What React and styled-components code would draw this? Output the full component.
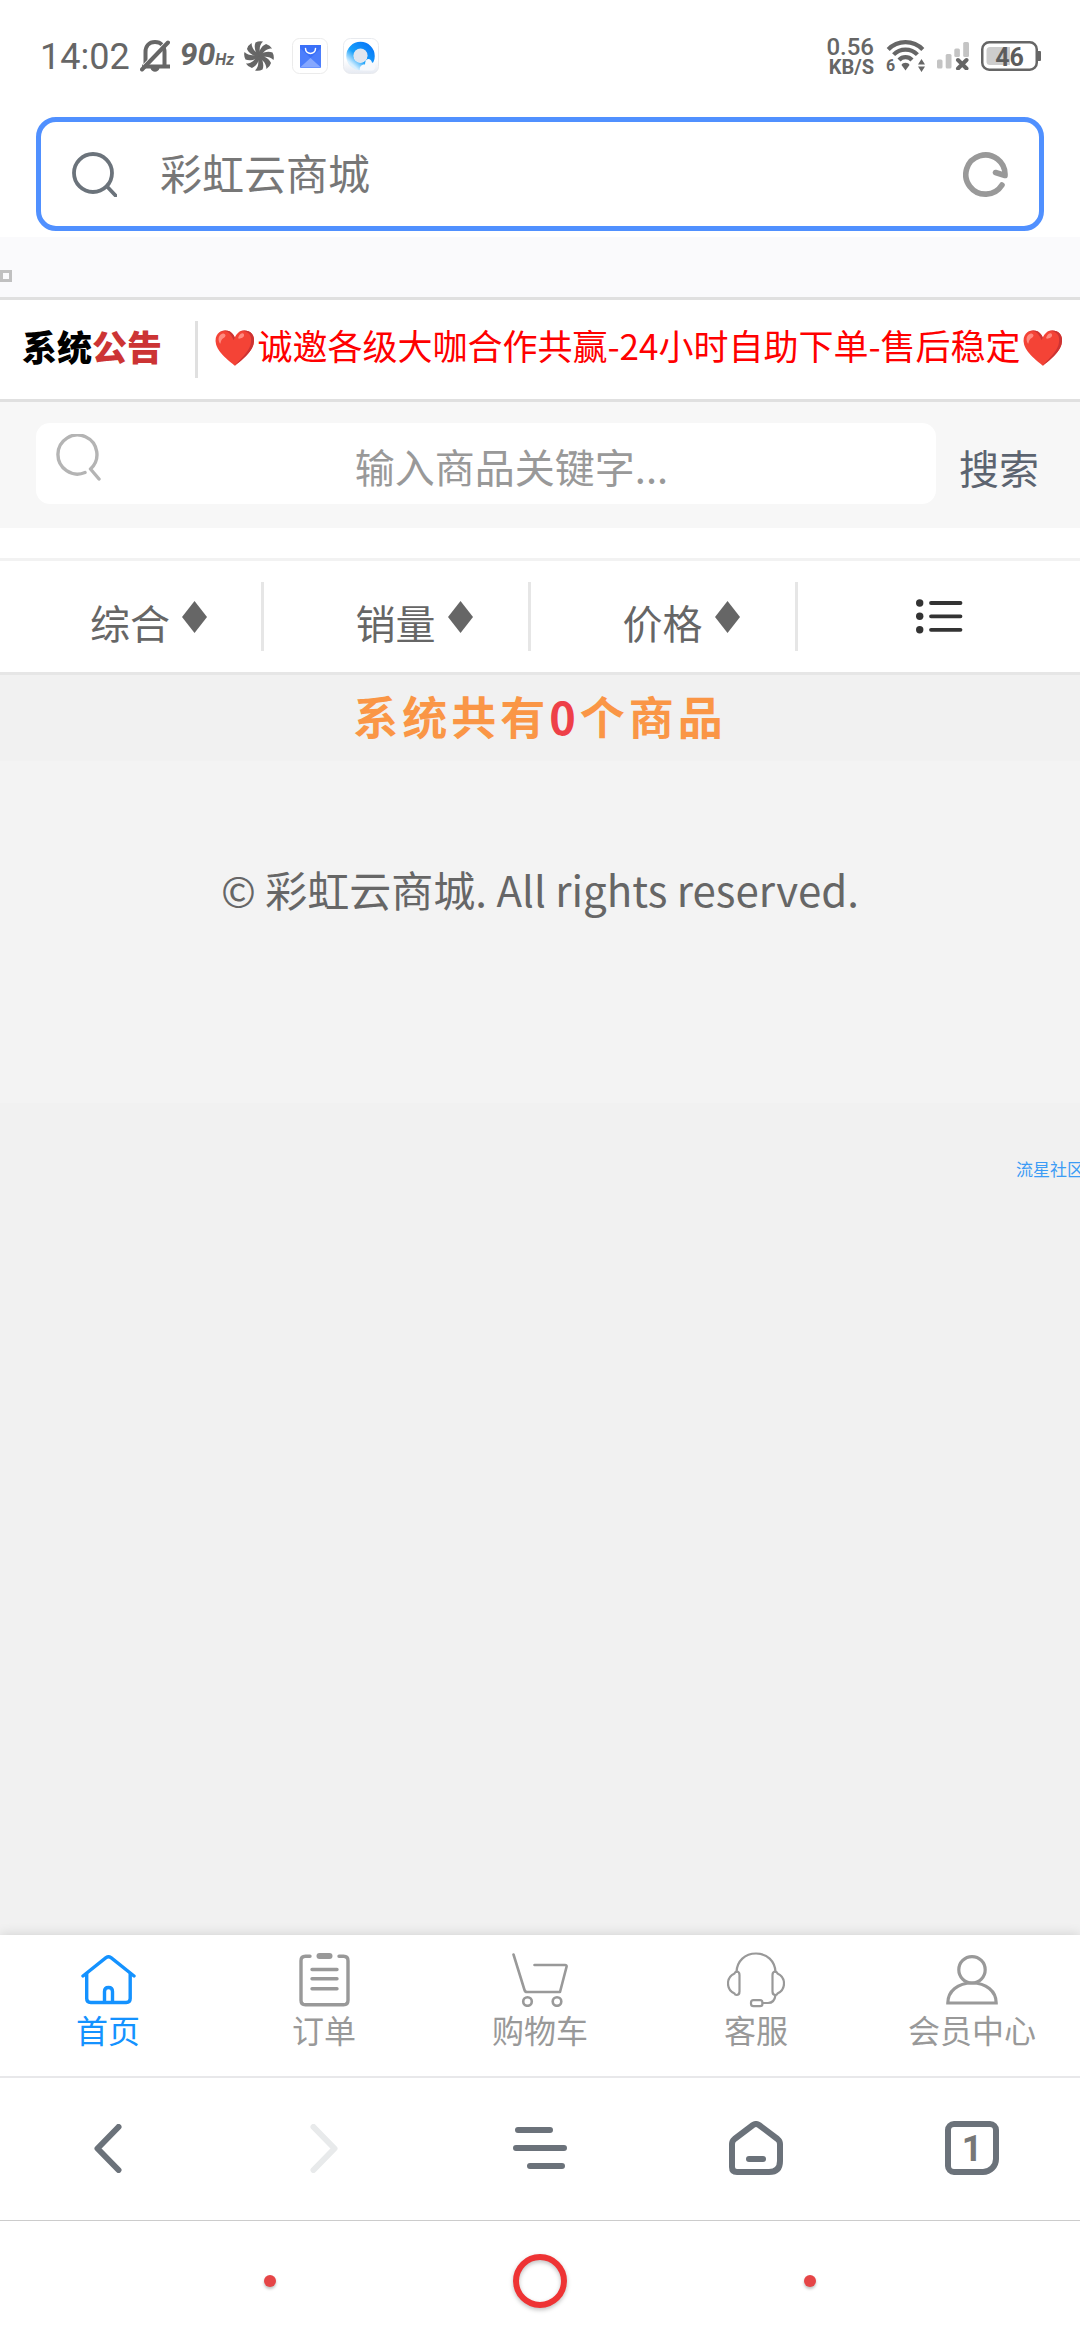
import React, { useState } from 'react'
import styled, { createGlobalStyle } from 'styled-components'

const GlobalStyle = createGlobalStyle`
    * { box-sizing: border-box; }
    body {
        margin: 0;
        background: #fff;
        font-family: "Noto Sans CJK SC", "Noto Sans", sans-serif;
        color: #666;
    }
    button, input {
        font-family: inherit;
        color: inherit;
        border: 0;
        padding: 0;
        background: none;
        outline: none;
    }
    svg { display: block; flex: none; }
`

const Page = styled.div`
    position: relative;
    display: flex;
    flex-direction: column;
    min-height: 100vh;
    overflow: hidden;
`

/* phone status bar */
const StatusBar = styled.div`
    display: flex;
    justify-content: space-between;
    align-items: center;
    height: 111px;
    padding: 0 39px 0 40px;
    font-family: Roboto, sans-serif;
    color: #666;
`

const StatusGroup = styled.div`
    display: flex;
    align-items: center;
    gap: ${props => props.$gap}px;
`

const Clock = styled.time`
    font-size: 36px;
    line-height: 40px;
    padding-top: 3px;
`

const RefreshRate = styled.span`
    padding-top: 3px;
    font-size: 32px;
    line-height: 36px;
    font-weight: 700;
    font-style: italic;
    small { font-size: 16px; }
`

const AppIcons = styled.div`
    display: flex;
    gap: 15px;
    margin-left: 8px;
`

const NetSpeed = styled.div`
    display: flex;
    flex-direction: column;
    align-items: flex-end;
    font-size: 24px;
    line-height: 22px;
    font-weight: 500;
    small {
        font-size: 20px;
        line-height: 18px;
        font-weight: 700;
    }
`

/* browser address bar */
const AddressBar = styled.form`
    display: flex;
    align-items: center;
    gap: 43px;
    height: 114px;
    margin: 6px 36px;
    padding: 0 31px;
    border: 5px solid #5090ff;
    border-radius: 20px;
`

const AddressInput = styled.input`
    flex: 1;
    min-width: 0;
    height: 60px;
    font-size: 42px;
    color: #777;
    padding-bottom: 6px;
`

const IconButton = styled.button`
    display: flex;
    align-items: center;
    justify-content: center;
`

const Strip = styled.div`
    height: 60px;
    padding-top: 33px;
    background: #fafafc;
`

const EmptyFrame = styled.div`
    width: 12px;
    height: 12px;
    border: 3px solid #c0c0c0;
`

/* notice */
const Notice = styled.section`
    display: flex;
    height: 105px;
    padding: 21px 0;
    border-top: 3px solid #e0e0e0;
    border-bottom: 3px solid #e0e0e0;
`

const NoticeLogo = styled.strong`
    flex: none;
    width: 198px;
    padding-left: 22px;
    border-right: 3px solid #e0e0e0;
    font-size: 35px;
    line-height: 50px;
    font-weight: 900;
    color: #000;
    span { color: #cc3434; }
`

const NoticeText = styled.div`
    flex: 1;
    font-size: 35px;
    line-height: 48px;
    text-align: center;
    white-space: nowrap;
    color: #f00;
`

/* goods search */
const SearchForm = styled.form`
    display: flex;
    height: 126px;
    padding: 21px 0 24px 36px;
    background: #f7f7f7;
`

const SearchBox = styled.label`
    flex: 1;
    display: flex;
    align-items: flex-start;
    padding: 11px 14px 0 19px;
    border-radius: 14px;
    background: #fff;
`

const SearchInput = styled.input`
    flex: 1;
    min-width: 0;
    height: 64px;
    font-size: 40px;
    text-align: center;
    color: #666;
    &::placeholder {
        color: #999;
        opacity: 1;
    }
`

const SearchButton = styled.button`
    width: 144px;
    padding: 6px 18px 0 0;
    font-size: 40px;
    line-height: 60px;
    text-align: center;
    color: #5c6470;
`

/* sorting */
const SortBar = styled.nav`
    display: grid;
    grid-template-columns: 264fr 267fr 267fr 282fr;
    height: 117px;
    margin-top: 30px;
    padding: 21px 0;
    border-top: 3px solid #f2f2f2;
    border-bottom: 3px solid #e6e6e6;
`

const SortButton = styled.button`
    display: flex;
    align-items: center;
    justify-content: center;
    gap: 12px;
    padding-left: ${props => props.$plain ? 0 : 36}px;
    border-right: ${props => props.$plain ? '0' : '3px solid #e6e6e6'};
    font-size: 40px;
    line-height: 58px;
    color: #666;
    span { padding-top: 11px; }
`

const Content = styled.main`
    flex: 1;
    background: #f1f1f1;
    text-align: center;
`

const Count = styled.p`
    margin: 0;
    height: 86px;
    font-size: 45px;
    line-height: 82px;
    font-weight: 700;
    letter-spacing: 4px;
    color: #fa9646;
    span { color: #ee4048; }
`

const Copyright = styled.footer`
    height: 342px;
    padding-top: 98px;
    background: #f3f3f3;
    font-size: 42px;
    line-height: 60px;
    color: #666;
`

const Watermark = styled.span`
    position: absolute;
    top: 1157px;
    right: -4px;
    font-size: 17px;
    line-height: 24px;
    color: #3c9cf5;
`

/* bottom bars */
const TabBar = styled.nav`
    display: grid;
    grid-template-columns: repeat(5, 1fr);
    height: 141px;
    background: #fff;
    box-shadow: 0 0 12px rgba(0, 0, 0, 0.14);
`

const TabLink = styled.a`
    display: flex;
    flex-direction: column;
    align-items: center;
    padding-top: 16px;
    font-size: 32px;
    line-height: 40px;
    text-decoration: none;
    color: ${props => props.$active ? '#1492ff' : '#999'};
`

const TabIcon = styled.span`
    display: flex;
    align-items: center;
    height: 58px;
`

const BrowserBar = styled.nav`
    display: grid;
    grid-template-columns: repeat(5, 1fr);
    height: 145px;
    padding-bottom: 2px;
    border-top: 2px solid #e8e8ea;
    border-bottom: 1px solid #ccc;
    background: #fff;
    color: #6b727a;
`

const TabCount = styled.span`
    width: 54px;
    height: 54px;
    border: 6px solid #6b727a;
    border-radius: 9px 9px 16px 9px;
    font-family: Roboto, sans-serif;
    font-size: 36px;
    line-height: 44px;
    font-weight: 700;
    color: #777;
`

const SystemNav = styled.nav`
    display: grid;
    grid-template-columns: repeat(3, 25%);
    place-content: center;
    place-items: center;
    height: 119px;
    background: #fff;
`

const Dot = styled.button`
    width: 12px;
    height: 12px;
    border-radius: 50%;
    background: #e64547;
    box-shadow: 0 2px 3px rgba(0, 0, 0, 0.25);
`

const Ring = styled.button`
    width: 54px;
    height: 54px;
    border: 6px solid #ee3334;
    border-radius: 50%;
    filter: drop-shadow(0 2px 2px rgba(0, 0, 0, 0.25));
`

const round = { fill: 'none', stroke: 'currentColor', strokeLinecap: 'round', strokeLinejoin: 'round' }

function BellOff() {
    return (
        <svg width="30" height="32" viewBox="0 0 30 32" fill="none" stroke="#666">
            <path d="M5.500 26V12C5.500 6 9 2 15 2s9.500 4 9.500 10v14M2 26.500h28" strokeWidth="4" />
            <path d="M10.500 28h9c-1 5-8 5-9 0z" fill="#666" stroke="none" />
            <path d="M3 25.500L25 2.500" stroke="#fff" strokeWidth="1.500" />
            <path d="M2 29.500L28 2.500" strokeWidth="4" strokeLinecap="round" />
        </svg>
    )
}

function Fan() {
    return (
        <svg width="30" height="30" viewBox="-15 -15 30 30" fill="#666">
            <circle r="4" />
            {[0, 1, 2, 3, 4, 5, 6, 7].map(i => (
                <path key={i} transform={`rotate(${i * 45})`} d="M-1 0C-4.500 -5 -5 -10 -3.500 -13.500Q0 -15.500 4 -14.500C.5 -11 .2 -7 1.200 -2z" />
            ))}
        </svg>
    )
}

function BagApp() {
    return (
        <svg width="36" height="36" viewBox="0 0 36 36">
            <rect x="0.5" y="0.5" width="35" height="35" rx="7" fill="#fff" stroke="#ebebeb" />
            <path d="M8 7h21v22a1 1 0 0 1-1 1H9a1 1 0 0 1-1-1z" fill="#4c7efc" />
            <path d="M8 7h21v3L18.500 20 8 10z" fill="#3a70f8" />
            <path d="M8 29.500L18.500 20 29 29.500z" fill="#86a8ff" />
            <path d="M13.500 10.500c0 6.500 10 6.500 10 0" fill="none" stroke="#fff" strokeWidth="1.500" strokeLinecap="round" />
        </svg>
    )
}

function BrowserApp() {
    return (
        <svg width="36" height="36" viewBox="0 0 36 36">
            <defs>
                <linearGradient id="ring" x1="1" y1="0.100" x2="0.200" y2="1">
                    <stop offset="0" stopColor="#0a7cf8" />
                    <stop offset="0.600" stopColor="#18a0fa" />
                    <stop offset="1" stopColor="#d8f0ff" />
                </linearGradient>
                <linearGradient id="tile" x1="0" y1="0" x2="0" y2="1">
                    <stop offset="0.600" stopColor="#fff" />
                    <stop offset="1" stopColor="#e6eaf2" />
                </linearGradient>
            </defs>
            <rect x="0.5" y="0.5" width="35" height="35" rx="7" fill="url(#tile)" stroke="#e8eaee" />
            <circle cx="17.500" cy="18" r="10.500" fill="none" stroke="url(#ring)" strokeWidth="7.500" />
            <circle cx="17.500" cy="17.500" r="7" fill="#e0e5ee" />
            <path d="M17 32.500c-1-4 2-6.500 5-6 0-7 6-7 7-2 4.500.5 4.500 8 0 8z" fill="#f7f9fd" />
        </svg>
    )
}

function Wifi() {
    return (
        <svg width="39" height="32" viewBox="0 0 39 32" fill="none" stroke="#666" strokeWidth="4.200" overflow="visible">
            <path d="M2.200 9.500A24 24 0 0 1 36.800 9.500M7.600 14.600A16.500 16.500 0 0 1 31.400 14.600M13 20A9 9 0 0 1 26 20" />
            <path d="M15.500 25c1-3 7-3 8 0l-4 5.500z" fill="#666" stroke="none" />
            <path d="M32 24.500l3.500-5.500 3.500 5.500zM32 26.500h7L35.500 32z" fill="#666" stroke="none" />
            <text x="0" y="31" fontSize="16" fontWeight="700" fill="#666" stroke="none">6</text>
        </svg>
    )
}

function Signal() {
    return (
        <svg width="32" height="28" viewBox="0 0 32 28" fill="#c4c4c4">
            <rect x="0" y="17.500" width="5.500" height="9" rx="1.500" />
            <rect x="8.700" y="12" width="5.800" height="14.500" rx="1.500" />
            <rect x="17.300" y="6.500" width="5.600" height="8.500" rx="1.500" />
            <rect x="26.200" y="0" width="5.800" height="15" rx="1.500" />
            <path d="M21 18l8.500 8.500M29.500 18L21 26.500" stroke="#666" strokeWidth="4" strokeLinecap="round" />
        </svg>
    )
}

function Battery() {
    return (
        <svg width="60" height="30" viewBox="0 0 60 30">
            <rect x="1.250" y="1.250" width="54.500" height="27.500" rx="7" fill="none" stroke="#666" strokeWidth="2.500" />
            <path d="M57 10h2a1 1 0 0 1 1 1v8a1 1 0 0 1-1 1h-2z" fill="#666" />
            <path d="M9 6h20v18H9q-3.500 0-3.500-3.500v-11Q5.500 6 9 6z" fill="#cdcdcd" />
            <text x="28.500" y="24.500" textAnchor="middle" fontSize="25" fontWeight="700" fill="#5c5c5c">46</text>
        </svg>
    )
}

function SearchIcon() {
    return (
        <svg width="45" height="45" viewBox="0 0 45 45" {...round} stroke="#6b737b" strokeWidth="3.800">
            <circle cx="21" cy="21" r="19" />
            <path d="M35.500 35l8 8.500" />
        </svg>
    )
}

function ReloadIcon() {
    return (
        <svg width="45" height="45" viewBox="0 0 45 45" {...round} stroke="#999" strokeWidth="5.600">
            <path d="M39 33A19.600 19.600 0 1 1 42 23.500L32.500 20.500" />
        </svg>
    )
}

function ThinSearchIcon() {
    return (
        <svg width="46" height="47" viewBox="0 0 46 47" {...round} stroke="#b4b4b4" strokeWidth="3.400">
            <path d="M30 38.500A19.500 19.500 0 1 1 35.500 35L44 45" />
        </svg>
    )
}

function Diamond() {
    return (
        <svg width="25" height="32" viewBox="0 0 25 32" fill="#666">
            <path d="M12.500 0L25 16 12.500 32 0 16z" />
        </svg>
    )
}

function ListIcon() {
    return (
        <svg width="47" height="35" viewBox="0 0 47 35" {...round} stroke="#333" strokeWidth="3.800">
            <path d="M15 4h29.500M15 17.300h29.500M15 30.800h29.500" />
            <g fill="#333" stroke="none">
                <circle cx="3.700" cy="4" r="3.700" />
                <circle cx="3.700" cy="17.300" r="3.700" />
                <circle cx="3.700" cy="30.800" r="3.700" />
            </g>
        </svg>
    )
}

function HomeIcon() {
    return (
        <svg width="55" height="50" viewBox="0 0 55 50" {...round} strokeWidth="3.400">
            <path d="M2 21L25 2.700Q27.500 1 30 2.700L53 21" />
            <path d="M5.700 19v24.500q0 4 4 4h35.500q4 0 4-4V19" />
            <path d="M23.500 47V36.500q0-4 4-4t4 4V47" />
        </svg>
    )
}

function OrderIcon() {
    return (
        <svg width="51" height="54" viewBox="0 0 51 54" {...round} strokeWidth="3.400">
            <path d="M11 3.300H6.500q-4.500 0-4.500 4.500v39.500q0 4.500 4.500 4.500h38q4.500 0 4.500-4.500V7.800q0-4.500-4.500-4.500H40" />
            <path d="M20.500 3h10" strokeWidth="6" />
            <path d="M13 16.500h25M13 25.700h25M13 35.700h25" />
        </svg>
    )
}

function CartIcon() {
    return (
        <svg width="56" height="54" viewBox="0 0 56 54" {...round} strokeWidth="2.600">
            <path d="M1.500 1.500L12.500 37q.6 2 2.500 2h33L54.500 14q.5-2-1.500-2H22.500" />
            <circle cx="15.500" cy="48.500" r="4.300" />
            <circle cx="45" cy="48.500" r="4.300" />
        </svg>
    )
}

function ServiceIcon() {
    return (
        <svg width="58" height="56" viewBox="0 0 58 56" {...round} strokeWidth="2.200">
            <path d="M9.500 20C10 9 18 1.500 29 1.500S48 9 48.500 20" />
            <path d="M12.500 23q0-3.500-3-3.500Q8 20 7.500 21.500 1 24.500 1 31.500t6.500 10Q8 43 9.500 43q3 0 3-3.500z" />
            <path d="M45.500 23q0-3.500 3-3.500 1.500.5 2 2 6.500 3 6.500 10t-6.500 10q-.5 1.500-2 1.500-3 0-3-3.500z" />
            <path d="M48.500 43q-1 8-7.500 8h-5.500" />
            <rect x="24" y="48.200" width="11.500" height="6" rx="2.500" />
        </svg>
    )
}

function UserIcon() {
    return (
        <svg width="52" height="50" viewBox="0 0 52 50" fill="none" stroke="currentColor" strokeWidth="3.200">
            <circle cx="26" cy="14.800" r="13.200" />
            <path d="M1.800 48C1.800 36 12 28 26 28s24.200 8 24.200 20z" />
        </svg>
    )
}

const tabs = [
    { name: '首页', icon: HomeIcon },
    { name: '订单', icon: OrderIcon },
    { name: '购物车', icon: CartIcon },
    { name: '客服', icon: ServiceIcon },
    { name: '会员中心', icon: UserIcon },
]

export default function App() {
    const [address, setAddress] = useState('彩虹云商城')
    const [keyword, setKeyword] = useState('')
    const [active, setActive] = useState(0)

    return (
        <Page>
            <GlobalStyle />
            <StatusBar>
                <StatusGroup $gap={10}>
                    <Clock>14:02</Clock>
                    <BellOff />
                    <RefreshRate>90<small>Hz</small></RefreshRate>
                    <Fan />
                    <AppIcons>
                        <BagApp />
                        <BrowserApp />
                    </AppIcons>
                </StatusGroup>
                <StatusGroup $gap={12}>
                    <NetSpeed><span>0.56</span><small>KB/S</small></NetSpeed>
                    <Wifi />
                    <Signal />
                    <Battery />
                </StatusGroup>
            </StatusBar>

            <AddressBar onSubmit={e => e.preventDefault()}>
                <SearchIcon />
                <AddressInput aria-label="地址" value={address} onChange={e => setAddress(e.target.value)} />
                <IconButton type="button" aria-label="刷新"><ReloadIcon /></IconButton>
            </AddressBar>

            <Strip><EmptyFrame /></Strip>

            <Notice>
                <NoticeLogo>系统<span>公告</span></NoticeLogo>
                <NoticeText>❤️诚邀各级大咖合作共赢-24小时自助下单-售后稳定❤️</NoticeText>
            </Notice>

            <SearchForm onSubmit={e => e.preventDefault()}>
                <SearchBox>
                    <ThinSearchIcon />
                    <SearchInput
                        aria-label="搜索商品"
                        placeholder="输入商品关键字..."
                        value={keyword}
                        onChange={e => setKeyword(e.target.value)}
                    />
                </SearchBox>
                <SearchButton>搜索</SearchButton>
            </SearchForm>

            <SortBar>
                {['综合', '销量', '价格'].map(name => (
                    <SortButton key={name} type="button"><span>{name}</span><Diamond /></SortButton>
                ))}
                <SortButton $plain type="button" aria-label="列表"><ListIcon /></SortButton>
            </SortBar>

            <Content>
                <Count>系统共有<span>0</span>个商品</Count>
                <Copyright>© 彩虹云商城. All rights reserved.</Copyright>
            </Content>
            <Watermark>流星社区</Watermark>

            <TabBar>
                {tabs.map(({ name, icon: Icon }, index) => (
                    <TabLink key={name} href="#" $active={index === active} onClick={() => setActive(index)}>
                        <TabIcon><Icon /></TabIcon>
                        {name}
                    </TabLink>
                ))}
            </TabBar>

            <BrowserBar>
                <IconButton aria-label="后退">
                    <svg width="28" height="49" viewBox="0 0 28 49" {...round} strokeWidth="6"><path d="M24.500 3L3.500 24.500l21 21.500" /></svg>
                </IconButton>
                <IconButton aria-label="前进">
                    <svg width="28" height="49" viewBox="0 0 28 49" {...round} stroke="#e8eaeb" strokeWidth="6"><path d="M3.500 3l21 21.500L3.500 46" /></svg>
                </IconButton>
                <IconButton aria-label="菜单">
                    <svg width="54" height="42" viewBox="0 0 54 42" {...round} strokeWidth="6"><path d="M5 3h32M3 21h48M17 39h32" /></svg>
                </IconButton>
                <IconButton aria-label="主页">
                    <svg width="54" height="54" viewBox="0 0 54 54" {...round} strokeWidth="6">
                        <path d="M3 23q0-3 2.500-5L24 4q3-2 6 0l18.500 14q2.500 2 2.500 5v17q0 11-11 11H8q-5 0-5-5z" />
                        <path d="M20 38h14" />
                    </svg>
                </IconButton>
                <IconButton aria-label="标签页"><TabCount>1</TabCount></IconButton>
            </BrowserBar>

            <SystemNav>
                <Dot aria-label="返回" />
                <Ring aria-label="桌面" />
                <Dot aria-label="最近" />
            </SystemNav>
        </Page>
    )
}
